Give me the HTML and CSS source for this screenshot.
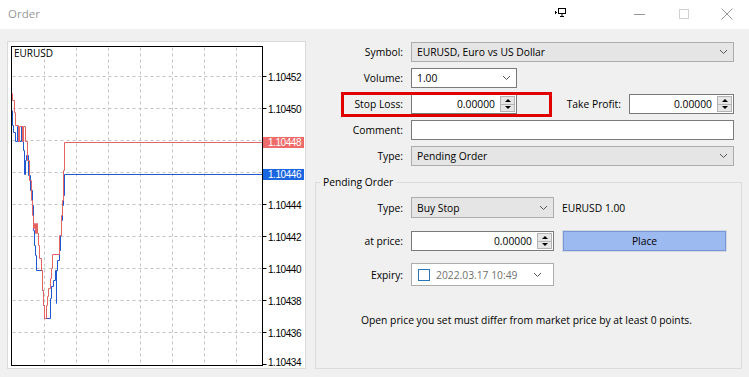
FILE: index.html
```html
<!DOCTYPE html>
<html lang="en">
<head>
  <meta charset="UTF-8">
  <title>Order</title>
  <link rel="stylesheet" href="styles.css">
</head>
<body>

  <!-- Window caption -->
  <div class="titlebar">
    <span class="title">Order</span>
    <div class="caption">
      <span class="cap-btn cap-net">
        <svg width="12" height="10" viewBox="0 0 12 10">
          <path d="M0 3h1v3H0zM1 4h1v1H1z" fill="#000"/>
          <rect x="3.5" y="0.5" width="7" height="5" fill="none" stroke="#000"/>
          <path d="M7 6v2M5 8.5h4" stroke="#000" fill="none"/>
        </svg>
      </span>
      <span class="cap-btn">
        <svg width="11" height="11" viewBox="0 0 11 11"><path d="M0 6.5h11" stroke="#999"/></svg>
      </span>
      <span class="cap-btn">
        <svg width="11" height="11" viewBox="0 0 11 11"><rect x="1.5" y="1.5" width="9" height="9" fill="none" stroke="#d0d0d0"/></svg>
      </span>
      <span class="cap-btn">
        <svg width="12" height="12" viewBox="0 0 12 12"><path d="M0.5 0.5l11 11M11.5 0.5l-11 11" stroke="#999"/></svg>
      </span>
    </div>
  </div>

  <div class="content">
    <!-- Tick chart -->
    <svg class="chart" width="299" height="328" viewBox="7 41 299 328">
      <rect x="7.5" y="41.5" width="298" height="327" fill="#fff" stroke="#dadada"/>
      <g transform="translate(0.5,0.5)">
        <g class="grid">
          <path d="M44 47V365M76 47V365M108 47V365M140 47V365M172 47V365M204 47V365M236 47V365"/>
          <path d="M12 76H262M12 108H262M12 140H262M12 172H262M12 204H262M12 236H262M12 268H262M12 300H262M12 332H262"/>
        </g>
        <path class="ticks" d="M262 76h4M262 108h4M262 140h4M262 172h4M262 204h4M262 236h4M262 268h4M262 300h4M262 332h4M262 364h4"/>
        <path class="bid" d="M12 110V125h1V132h2V141h2V126h1V141h3V126h1V141h1V150h1V174h1V160h1V155h2V175h2V190h2V205h1V230h1V245h1V255h1V270h6V290h1V305h1V318h6V298h1V286h2V280h2V270h1V303V270h1V260h2V250h1V235h1V220h1V205h1V195h1V174H262"/>
        <path class="ask" d="M12 93V100h2V112h1V125h3V141h1V126h3V141h1V126h2V141h2V160h2V180h2V200h1V215h1V228h1V223h1V233h1V223h1V233h1V245h1V258h2V270h1V290h1V305h1V318h2V305h1V296h1V288h2V278h1V268h1V254h7V235h2V215h1V200h1V170h1V142H262"/>
        <rect x="11" y="46" width="251" height="319" fill="none" stroke="#000"/>
      </g>
      <text class="sym" x="14" y="57">EURUSD</text>
      <g class="scale">
        <text x="268" y="81">1.10452</text>
        <text x="268" y="113">1.10450</text>
        <text x="268" y="209">1.10444</text>
        <text x="268" y="241">1.10442</text>
        <text x="268" y="273">1.10440</text>
        <text x="268" y="305">1.10438</text>
        <text x="268" y="337">1.10436</text>
        <text x="268" y="366">1.10434</text>
      </g>
      <rect x="263" y="137" width="41" height="11" fill="#ee6b6b"/>
      <text class="tag" x="268" y="146">1.10448</text>
      <rect x="263" y="169" width="41" height="11" fill="#1a66e0"/>
      <text class="tag" x="268" y="178">1.10446</text>
    </svg>

    <!-- Order form -->
    <div class="form">
      <div class="row">
        <label>Symbol:</label>
        <div class="combo wide">
          <span>EURUSD, Euro vs US Dollar</span>
          <svg class="chev" width="7" height="4" viewBox="0 0 7 4"><path d="M0 0l3.5 3.5L7 0" fill="none" stroke="#555"/></svg>
        </div>
      </div>
      <div class="row">
        <label>Volume:</label>
        <div class="combo edit volume">
          <span>1.00</span>
          <svg class="chev" width="7" height="4" viewBox="0 0 7 4"><path d="M0 0l3.5 3.5L7 0" fill="none" stroke="#555"/></svg>
        </div>
      </div>
      <div class="row sl-row">
        <label>Stop Loss:</label>
        <div class="spin">
          <span class="num">0.00000</span>
          <span class="spinner"><i class="up"></i><i class="down"></i></span>
        </div>
        <label class="tp-label">Take Profit:</label>
        <div class="spin tp">
          <span class="num">0.00000</span>
          <span class="spinner"><i class="up"></i><i class="down"></i></span>
        </div>
        <div class="highlight"></div>
      </div>
      <div class="row">
        <label>Comment:</label>
        <div class="edit-box wide"></div>
      </div>
      <div class="row">
        <label>Type:</label>
        <div class="combo wide">
          <span>Pending Order</span>
          <svg class="chev" width="7" height="4" viewBox="0 0 7 4"><path d="M0 0l3.5 3.5L7 0" fill="none" stroke="#555"/></svg>
        </div>
      </div>

      <fieldset class="group">
        <legend>Pending Order</legend>
        <div class="row prow-type">
          <label class="plabel">Type:</label>
          <div class="combo short">
            <span>Buy Stop</span>
            <svg class="chev" width="7" height="4" viewBox="0 0 7 4"><path d="M0 0l3.5 3.5L7 0" fill="none" stroke="#555"/></svg>
          </div>
          <span class="lot">EURUSD 1.00</span>
        </div>
        <div class="row prow">
          <label class="plabel">at price:</label>
          <div class="spin price">
            <span class="num">0.00000</span>
            <span class="spinner"><i class="up"></i><i class="down"></i></span>
          </div>
          <button class="place">Place</button>
        </div>
        <div class="row prow-expiry">
          <label class="plabel">Expiry:</label>
          <div class="expiry">
            <span class="check"></span>
            <span class="date">2022.03.17 10:49</span>
            <svg class="chev" width="7" height="4" viewBox="0 0 7 4"><path d="M0 0l3.5 3.5L7 0" fill="none" stroke="#555"/></svg>
          </div>
        </div>
        <p class="note">Open price you set must differ from market price by at least 0 points.</p>
      </fieldset>
    </div>
  </div>

</body>
</html>
```

FILE: styles.css
```css
body {
  font-family: 'Open Sans', 'Noto Sans', sans-serif;
  font-size: 10.3px;
  color: #000;
  background-color: #f0f0f0;
  margin: 0;
  padding: 0;
  width: 749px;
  height: 377px;
  overflow: hidden;
}

/* Caption */
.titlebar {
  height: 29px;
  background-color: #fff;
  display: flex;
  align-items: center;
  justify-content: space-between;
}

.title {
  margin-left: 8px;
  font-size: 11.5px;
  color: #999;
  margin-top: -2px;
}

.caption {
  display: flex;
  height: 29px;
}

.cap-btn {
  width: 44px;
  display: flex;
  align-items: center;
  justify-content: center;
  margin-top: -2px;
}

.cap-net {
  width: 14px;
  margin-right: 49px;
  margin-top: -3px;
}

/* Layout */
.content {
  display: flex;
  padding: 12px 0 0 7px;
}

.chart {
  display: block;
  flex: none;
}

.grid path {
  stroke: #c4c4c4;
  stroke-dasharray: 3 3;
  fill: none;
}

.ticks {
  stroke: #000;
  fill: none;
}

.ask {
  stroke: #e46464;
  fill: none;
}

.bid {
  stroke: #1f58d0;
  fill: none;
}

.chart text {
  font-family: 'Liberation Sans', sans-serif;
  font-size: 10px;
  letter-spacing: -0.45px;
}

.chart .sym {
  font-family: 'Open Sans', sans-serif;
  letter-spacing: 0;
  font-size: 10px;
}

.chart .tag {
  fill: #fff;
}

.form {
  width: 419px;
  margin-left: 9px;
  padding: 1px 8px 0 0;
}

.row {
  display: flex;
  align-items: center;
  height: 20px;
  margin-bottom: 6px;
}

.row label {
  flex: none;
  width: 88px;
  margin-right: 8px;
  text-align: right;
}

/* Controls */
.combo {
  height: 100%;
  box-sizing: border-box;
  border: 1px solid #adadad;
  background-color: #e5e5e5;
  display: flex;
  align-items: center;
  justify-content: space-between;
  padding: 0 6px 0 5px;
}

.combo.edit {
  background-color: #fff;
  border-color: #7a7a7a;
}

.wide {
  flex: 1;
}

.volume {
  width: 106px;
}

.short {
  width: 143px;
}

.chev {
  flex: none;
}

.edit-box {
  height: 100%;
  box-sizing: border-box;
  background-color: #fff;
  border: 1px solid #7a7a7a;
}

.spin {
  height: 100%;
  width: 106px;
  box-sizing: border-box;
  background-color: #fff;
  border: 1px solid #7a7a7a;
  display: flex;
  align-items: center;
  justify-content: flex-end;
  padding: 1px;
}

.spin .num {
  margin-right: 5px;
}

.spin.tp {
  width: 105px;
}

.spin.price {
  width: 143px;
}

.spinner {
  width: 15px;
  height: 100%;
  display: flex;
  flex-direction: column;
}

.spinner i {
  flex: 1;
  position: relative;
  background-color: #e6e6e6;
  border: 1px solid #b4b4b4;
}

.spinner i + i {
  border-top: none;
}

.spinner i::after {
  content: "";
  position: absolute;
  left: 4px;
  top: 2px;
  border-left: 3px solid transparent;
  border-right: 3px solid transparent;
}

.spinner .up::after {
  border-bottom: 3px solid #000;
}

.spinner .down::after {
  top: 1px;
  border-top: 3px solid #000;
}

.sl-row {
  position: relative;
}

.tp-label.tp-label {
  width: auto;
  margin-left: auto;
}

.highlight {
  position: absolute;
  left: 26px;
  top: -2px;
  width: 205px;
  height: 19px;
  border: 3px solid #e00000;
}

/* Pending order group */
.group {
  margin: 8px -8px 0 0;
  height: 195px;
  box-sizing: border-box;
  border: 1px solid #dcdcdc;
  padding: 7px 8px 0 4px;
}

.group legend {
  padding: 0 3px;
  line-height: 16px;
}

.row .plabel {
  width: 83px;
}

.prow-type {
  height: 21px;
  margin-bottom: 13px;
}

.prow {
  margin-bottom: 12px;
}

.prow-expiry {
  height: 23px;
  margin-bottom: 0;
}

.lot {
  margin-left: 8px;
}

.place {
  margin-left: 9px;
  width: 163px;
  height: 20px;
  font-family: inherit;
  font-size: inherit;
  color: #000;
  background-color: #9cb9f0;
  border: 1px solid #7597d8;
  box-shadow: 0 0 0 1px #d6d9df;
  padding: 0;
}

.expiry {
  width: 143px;
  height: 100%;
  box-sizing: border-box;
  background-color: #fff;
  border: 1px solid #adadad;
  display: flex;
  align-items: center;
  padding-left: 6px;
}

.check {
  width: 12px;
  height: 12px;
  box-sizing: border-box;
  border: 1px solid #2a75b8;
  flex: none;
}

.date {
  width: 88px;
  margin-left: 6px;
  color: #707070;
  overflow: hidden;
  white-space: nowrap;
}

.expiry .chev {
  margin-left: 10px;
}

.note {
  margin: 26px 0 0;
  line-height: 16px;
  text-align: center;
}
```
